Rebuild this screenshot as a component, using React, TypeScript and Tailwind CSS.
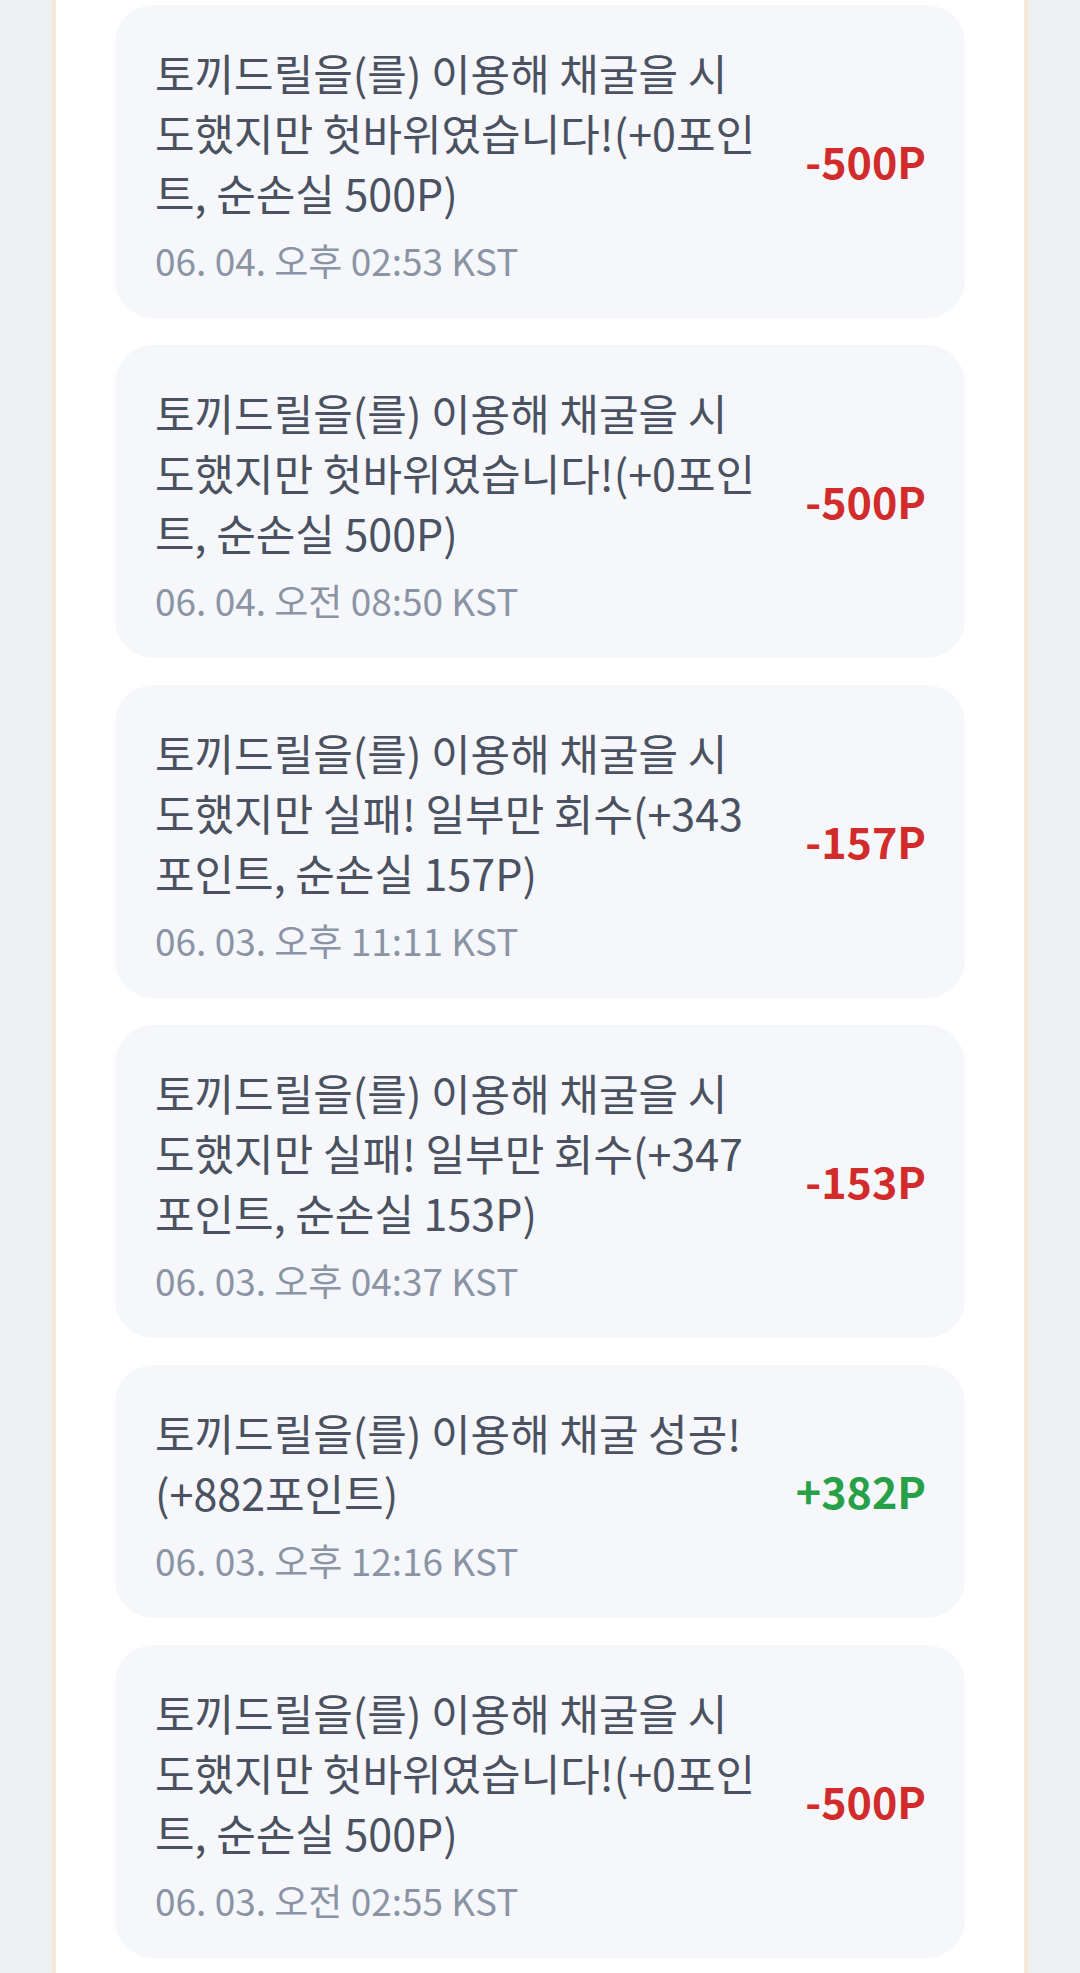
import React from "react";

type Item = { text: string; date: string; amount: string; positive: boolean };

const items: Item[] = [
  {
    text: "토끼드릴을(를) 이용해 채굴을 시도했지만 헛바위였습니다!(+0포인트, 순손실 500P)",
    date: "06. 04. 오후 02:53 KST",
    amount: "-500P",
    positive: false,
  },
  {
    text: "토끼드릴을(를) 이용해 채굴을 시도했지만 헛바위였습니다!(+0포인트, 순손실 500P)",
    date: "06. 04. 오전 08:50 KST",
    amount: "-500P",
    positive: false,
  },
  {
    text: "토끼드릴을(를) 이용해 채굴을 시도했지만 실패! 일부만 회수(+343포인트, 순손실 157P)",
    date: "06. 03. 오후 11:11 KST",
    amount: "-157P",
    positive: false,
  },
  {
    text: "토끼드릴을(를) 이용해 채굴을 시도했지만 실패! 일부만 회수(+347포인트, 순손실 153P)",
    date: "06. 03. 오후 04:37 KST",
    amount: "-153P",
    positive: false,
  },
  {
    text: "토끼드릴을(를) 이용해 채굴 성공!(+882포인트)",
    date: "06. 03. 오후 12:16 KST",
    amount: "+382P",
    positive: true,
  },
  {
    text: "토끼드릴을(를) 이용해 채굴을 시도했지만 헛바위였습니다!(+0포인트, 순손실 500P)",
    date: "06. 03. 오전 02:55 KST",
    amount: "-500P",
    positive: false,
  },
];

export default function App() {
  return (
    <div
      className="min-h-screen w-full bg-[#eef0f4]"
      style={{ fontFamily: '"Noto Sans CJK KR", "Noto Sans", sans-serif' }}
    >
      <div className="mx-[52px] min-h-screen border-x-4 border-[#f6e8d6] bg-white px-[59px] pt-[5px] pb-[16px]">
        <div className="flex flex-col gap-[27px]">
          {items.map((it, i) => (
            <div
              key={i}
              className="flex items-center justify-between rounded-[38px] bg-[#f5f7fa] pl-[40px] pr-[39px] pt-[37px] pb-[34px]"
            >
              <div className="w-[608px]">
                <p className="text-[43px] leading-[60px] text-[#4a5160]">{it.text}</p>
                <p className="mt-[14px] text-[37px] leading-[48px] text-[#8b94a5]">{it.date}</p>
              </div>
              <div
                className={
                  it.positive
                    ? "mb-[6px] text-[43px] font-bold leading-[52px] text-[#27a047]"
                    : "mb-[6px] text-[43px] font-bold leading-[52px] text-[#d12b2b]"
                }
              >
                {it.amount}
              </div>
            </div>
          ))}
        </div>
      </div>
    </div>
  );
}
